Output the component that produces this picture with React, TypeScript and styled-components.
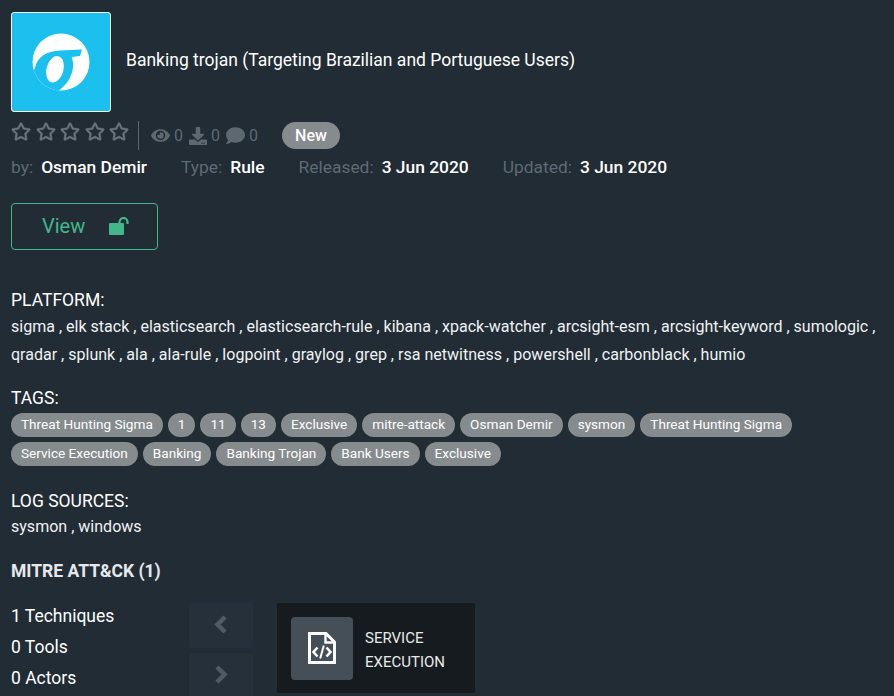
import React from "react";
import styled, { createGlobalStyle } from "styled-components";
import { FaRegStar, FaEye, FaDownload, FaComment } from "react-icons/fa";

const GlobalStyle = createGlobalStyle`
  html, body {
    margin: 0;
    padding: 0;
    background: #212c35;
    font-family: Roboto, "Liberation Sans", sans-serif;
  }
`;

const Page = styled.div`
  width: 894px;
  height: 696px;
  overflow: hidden;
  box-sizing: border-box;
  padding: 12px 0 0 11px;
  color: #fff;
`;

const Head = styled.div`
  display: flex;
  align-items: center;
  gap: 15px;
`;

const Logo = styled.div`
  width: 100px;
  height: 100px;
  border-radius: 3px;
  background: #1cc0ee;
  border: 1px solid #fff;
  box-sizing: border-box;
  display: flex;
  align-items: center;
  justify-content: center;
`;

const Title = styled.h1`
  margin: 0 0 4px;
  font-size: 17.5px;
  font-weight: 400;
  line-height: 24px;
`;

const StatsRow = styled.div`
  display: flex;
  align-items: center;
  height: 29px;
  margin-top: 9px;
`;

const Stars = styled.div`
  display: flex;
  gap: 4.5px;
  margin-right: 9px;
  margin-top: -8px;
  color: #69757d;
  svg {
    display: block;
    width: 20px;
    height: 19px;
    stroke: currentColor;
    stroke-width: 14;
  }
`;

const Divider = styled.div`
  width: 1px;
  height: 29px;
  background: #59646c;
  margin-right: 12px;
`;

const Stat = styled.span`
  display: flex;
  align-items: center;
  gap: 4px;
  font-size: 16px;
  margin-right: 6px;
  color: #5d6870;
`;

const NewBadge = styled.span`
  margin-left: 18px;
  background: #868b8e;
  color: #fff;
  border-radius: 14px;
  height: 27px;
  width: 58px;
  display: flex;
  align-items: center;
  justify-content: center;
  font-size: 16px;
  font-weight: 500;
`;

const MetaRow = styled.div`
  display: flex;
  gap: 34px;
  margin-top: 5px;
  font-size: 17.4px;
  line-height: 24px;
`;

const MetaItem = styled.div`
  display: flex;
  gap: 8px;
  color: #5f6a72;
  b {
    color: #fff;
    font-weight: 500;
  }
`;

const ViewButton = styled.button`
  display: flex;
  align-items: center;
  width: 147px;
  height: 47px;
  margin-top: 24px;
  padding: 0 0 2px 30px;
  gap: 24px;
  background: transparent;
  border: 1px solid #42b88a;
  border-radius: 4px;
  color: #42b88a;
  font: 400 20px Roboto, sans-serif;
`;

const Section = styled.section<{ $top: number }>`
  margin-top: ${(p) => p.$top}px;
`;

const Label = styled.div`
  font-size: 17.5px;
  line-height: 22px;
`;

const Text = styled.div<{ $gap: number }>`
  margin-top: ${(p) => p.$gap}px;
  font-size: 16.05px;
  line-height: 28px;
  color: #f0f2f3;
  width: 880px;
`;

const Tags = styled.div`
  display: flex;
  flex-wrap: wrap;
  gap: 5px;
  margin-top: 4px;
`;

const Tag = styled.span`
  height: 24px;
  line-height: 23px;
  padding: 0 10px;
  border-radius: 12px;
  background: #868b8e;
  font-size: 13.6px;
`;

const MitreTitle = styled.div`
  font-size: 17.5px;
  font-weight: 700;
  color: #e6e8ea;
  line-height: 22px;
`;

const MitreRow = styled.div`
  display: flex;
  margin-top: 21px;
`;

const Counts = styled.div`
  width: 178px;
  margin-top: -2px;
  font-size: 17.5px;
  line-height: 31px;
`;

const Arrows = styled.div`
  display: flex;
  flex-direction: column;
  gap: 5px;
  width: 64px;
  margin-right: 24px;
`;

const Arrow = styled.div`
  height: 45px;
  box-sizing: border-box;
  padding-bottom: 3px;
  background: #25303a;
  border-radius: 3px;
  display: flex;
  align-items: center;
  justify-content: center;
  color: #4e5b64;
`;

const Card = styled.div`
  width: 198px;
  height: 90px;
  background: #161b1f;
  display: flex;
  align-items: center;
  padding-left: 14px;
  box-sizing: border-box;
  gap: 12px;
`;

const CardIcon = styled.div`
  width: 62px;
  height: 63px;
  border-radius: 4px;
  background: #454f57;
  display: flex;
  align-items: center;
  justify-content: center;
`;

const CardText = styled.div`
  margin-top: 3px;
  font-size: 15px;
  line-height: 24px;
  color: #e8eaeb;
`;

const Chevron = ({ right }: { right?: boolean }) => (
  <svg width="14" height="19" viewBox="0 0 14 19">
    <polyline
      points={right ? "3,2 10.5,9.5 3,17" : "11,2 3.5,9.5 11,17"}
      fill="none"
      stroke="currentColor"
      strokeWidth="4.5"
    />
  </svg>
);

const tags = [
  "Threat Hunting Sigma", "1", "11", "13", "Exclusive", "mitre-attack", "Osman Demir", "sysmon",
  "Threat Hunting Sigma", "Service Execution", "Banking", "Banking Trojan", "Bank Users", "Exclusive",
];

const App = () => (
  <Page>
    <GlobalStyle />
    <Head>
      <Logo>
        <svg width="58" height="58" viewBox="0 0 58 58">
          <defs>
            <clipPath id="logo-circle">
              <circle cx="29" cy="29" r="28.5" />
            </clipPath>
          </defs>
          <g clipPath="url(#logo-circle)">
            <rect width="58" height="58" fill="#fff" />
            <path
              d="M0 40 L3 35 C5 24 15 18 28 17.5 L50 16.5 L48 23 L39.7 24 C44 36 38 50 26 58 L0 58 Z"
              fill="#1cc0ee"
            />
            <ellipse cx="23" cy="36.3" rx="8.5" ry="13.5" transform="rotate(15 23 36.3)" fill="#fff" />
          </g>
        </svg>
      </Logo>
      <Title>Banking trojan (Targeting Brazilian and Portuguese Users)</Title>
    </Head>
    <StatsRow>
      <Stars>
        <FaRegStar /><FaRegStar /><FaRegStar /><FaRegStar /><FaRegStar />
      </Stars>
      <Divider />
      <Stat><FaEye size={19} />0</Stat>
      <Stat><FaDownload size={18} />0</Stat>
      <Stat><FaComment size={19} />0</Stat>
      <NewBadge>New</NewBadge>
    </StatsRow>
    <MetaRow>
      <MetaItem>by: <b>Osman Demir</b></MetaItem>
      <MetaItem>Type: <b>Rule</b></MetaItem>
      <MetaItem>Released: <b>3 Jun 2020</b></MetaItem>
      <MetaItem>Updated: <b>3 Jun 2020</b></MetaItem>
    </MetaRow>
    <ViewButton>
      View
      <svg width="20" height="18" viewBox="0 0 20 18">
        <rect x="0" y="6" width="15" height="12" rx="1" fill="#42b88a" />
        <path d="M10.5 6 V5 a4 4 0 0 1 8 0 v2" fill="none" stroke="#42b88a" strokeWidth="2.2" />
      </svg>
    </ViewButton>
    <Section $top={39}>
      <Label>PLATFORM:</Label>
      <Text $gap={2}>
        sigma , elk stack , elasticsearch , elasticsearch-rule , kibana , xpack-watcher , arcsight-esm , arcsight-keyword , sumologic , qradar , splunk , ala , ala-rule , logpoint , graylog , grep , rsa netwitness , powershell , carbonblack , humio
      </Text>
    </Section>
    <Section $top={18}>
      <Label>TAGS:</Label>
      <Tags>
        {tags.map((t, i) => <Tag key={i}>{t}</Tag>)}
      </Tags>
    </Section>
    <Section $top={24}>
      <Label>LOG SOURCES:</Label>
      <Text $gap={1}>sysmon , windows</Text>
    </Section>
    <Section $top={19}>
      <MitreTitle>MITRE ATT&amp;CK (1)</MitreTitle>
      <MitreRow>
        <Counts>
          <div>1 Techniques</div>
          <div>0 Tools</div>
          <div>0 Actors</div>
        </Counts>
        <Arrows>
          <Arrow><Chevron /></Arrow>
          <Arrow><Chevron right /></Arrow>
        </Arrows>
        <Card>
          <CardIcon>
            <svg width="28" height="32" viewBox="0 0 28 32" fill="none" stroke="#fff">
              <path d="M1.5 1.5 H18 L26.5 10 V30.5 H1.5 Z" strokeWidth="3" />
              <path d="M17.5 2 V10.5 H26" strokeWidth="2.4" />
              <path d="M9.5 15.5 L5.5 20 L9.5 24.5 M18.5 15.5 L22.5 20 L18.5 24.5" strokeWidth="2.6" />
              <path d="M15.8 13.5 L12.2 26.5" strokeWidth="2" />
            </svg>
          </CardIcon>
          <CardText>SERVICE<br />EXECUTION</CardText>
        </Card>
      </MitreRow>
    </Section>
  </Page>
);

export default App;
